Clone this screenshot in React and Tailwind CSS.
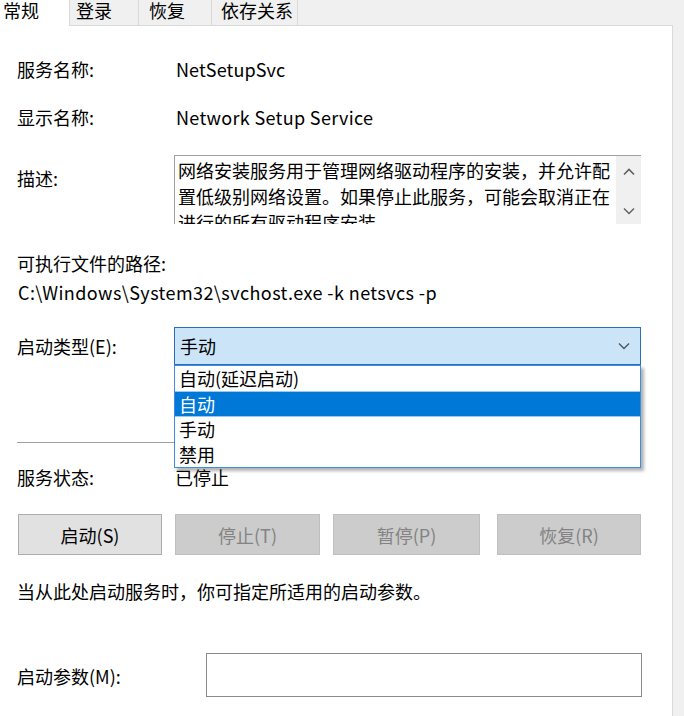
import React from "react";

function ChevronDown({ className }) {
  return (
    <svg className={className} width="12" height="8" viewBox="0 0 12 8" fill="none">
      <path d="M1 1.5 L6 6.5 L11 1.5" stroke="currentColor" strokeWidth="1.4" />
    </svg>
  );
}
function ChevronUp({ className }) {
  return (
    <svg className={className} width="12" height="8" viewBox="0 0 12 8" fill="none">
      <path d="M1 6.5 L6 1.5 L11 6.5" stroke="currentColor" strokeWidth="1.6" />
    </svg>
  );
}

export default function App() {
  return (
    <div className="w-[684px] h-[716px] bg-[#f0f0f0] overflow-hidden text-[18px] text-black font-['Noto_Sans_CJK_SC','Noto_Sans',sans-serif] leading-[24px]">
      <div className="w-[673px] h-[716px] flex flex-col">
        {/* tab strip */}
        <div className="h-[26px] flex shrink-0">
          <div className="w-[69px] bg-white pl-[3px] leading-[21px]">常规</div>
          <div className="w-[69px] border-l border-b border-[#d9d9d9] pl-[6px] leading-[21px]">登录</div>
          <div className="w-[73px] border-l border-b border-[#d9d9d9] pl-[10px] leading-[21px]">恢复</div>
          <div className="w-[87px] border-l border-r border-b border-[#d9d9d9] pl-[9px] leading-[21px]">依存关系</div>
          <div className="flex-1 border-b border-[#d9d9d9]"></div>
        </div>
        {/* panel */}
        <div className="flex-1 bg-white border-r border-[#dadada] flex flex-col pl-[17px] pt-[31px]">
          <div className="flex h-[24px]">
            <div className="w-[159px]">服务名称:</div>
            <div className="tracking-[0.1px]">NetSetupSvc</div>
          </div>
          <div className="flex h-[24px] mt-[24px]">
            <div className="w-[159px]">显示名称:</div>
            <div className="tracking-[0.33px]">Network Setup Service</div>
          </div>
          <div className="flex mt-[26px]">
            <div className="w-[157px] mt-[11px]">描述:</div>
            <div className="w-[467px] h-[69px] border-t border-l border-[#a0a0a0] flex overflow-hidden">
              <div className="flex-1 pl-[3px] pt-[1px] leading-[26px] overflow-hidden">
                网络安装服务用于管理网络驱动程序的安装，并允许配置低级别网络设置。如果停止此服务，可能会取消正在进行的所有驱动程序安装。
              </div>
              <div className="w-[25px] bg-[#f0f0f0] flex flex-col items-center justify-between pt-[12px] pb-[9px] text-[#606060]">
                <ChevronUp />
                <ChevronDown />
              </div>
            </div>
          </div>
          <div className="h-[24px] mt-[27px]">可执行文件的路径:</div>
          <div className="h-[24px] mt-[5px] pl-[1px] tracking-[0.42px]">C:\Windows\System32\svchost.exe -k netsvcs -p</div>
          <div className="flex mt-[23px]">
            <div className="w-[157px] mt-[7px] h-[24px]">启动类型(E):</div>
            <div className="relative w-[467px]">
              <div className="h-[38px] bg-[#cce4f7] border border-[#2a6fb8] flex items-center pl-[5px] pr-[10px] justify-between">
                <span>手动</span>
                <ChevronDown className="text-[#555]" />
              </div>
              <div className="absolute left-0 top-full w-full border border-[#3d8ee0] bg-white shadow-[3px_3px_3px_rgba(0,0,0,0.3)] leading-[25px] z-10">
                <div className="h-[25px] pl-[4px]">自动(延迟启动)</div>
                <div className="h-[26px] pl-[4px] bg-[#0078d7] text-white border-y border-[#99c9ef] leading-[24px]">自动</div>
                <div className="h-[25px] pl-[4px]">手动</div>
                <div className="h-[25px] pl-[4px]">禁用</div>
              </div>
            </div>
          </div>
          <div className="w-[623px] h-[1px] bg-[#a0a0a0] mt-[77px]"></div>
          <div className="flex h-[24px] mt-[22px]">
            <div className="w-[158px]">服务状态:</div>
            <div>已停止</div>
          </div>
          <div className="flex mt-[25px] pl-[1px] h-[41px]">
            <div className="w-[144px] bg-[#e1e1e1] border border-[#adadad] flex items-center justify-center">启动(S)</div>
            <div className="w-[145px] ml-[13px] bg-[#cccccc] border border-[#bfbfbf] text-[#838383] flex items-center justify-center">停止(T)</div>
            <div className="w-[147px] ml-[13px] bg-[#cccccc] border border-[#bfbfbf] text-[#838383] flex items-center justify-center">暂停(P)</div>
            <div className="w-[144px] ml-[17px] bg-[#cccccc] border border-[#bfbfbf] text-[#838383] flex items-center justify-center">恢复(R)</div>
          </div>
          <div className="h-[24px] mt-[24px]">当从此处启动服务时，你可指定所适用的启动参数。</div>
          <div className="flex mt-[50px]">
            <div className="w-[189px] mt-[11px] h-[24px]">启动参数(M):</div>
            <div className="w-[436px] h-[44px] border border-[#8a8a8a]"></div>
          </div>
        </div>
      </div>
    </div>
  );
}
